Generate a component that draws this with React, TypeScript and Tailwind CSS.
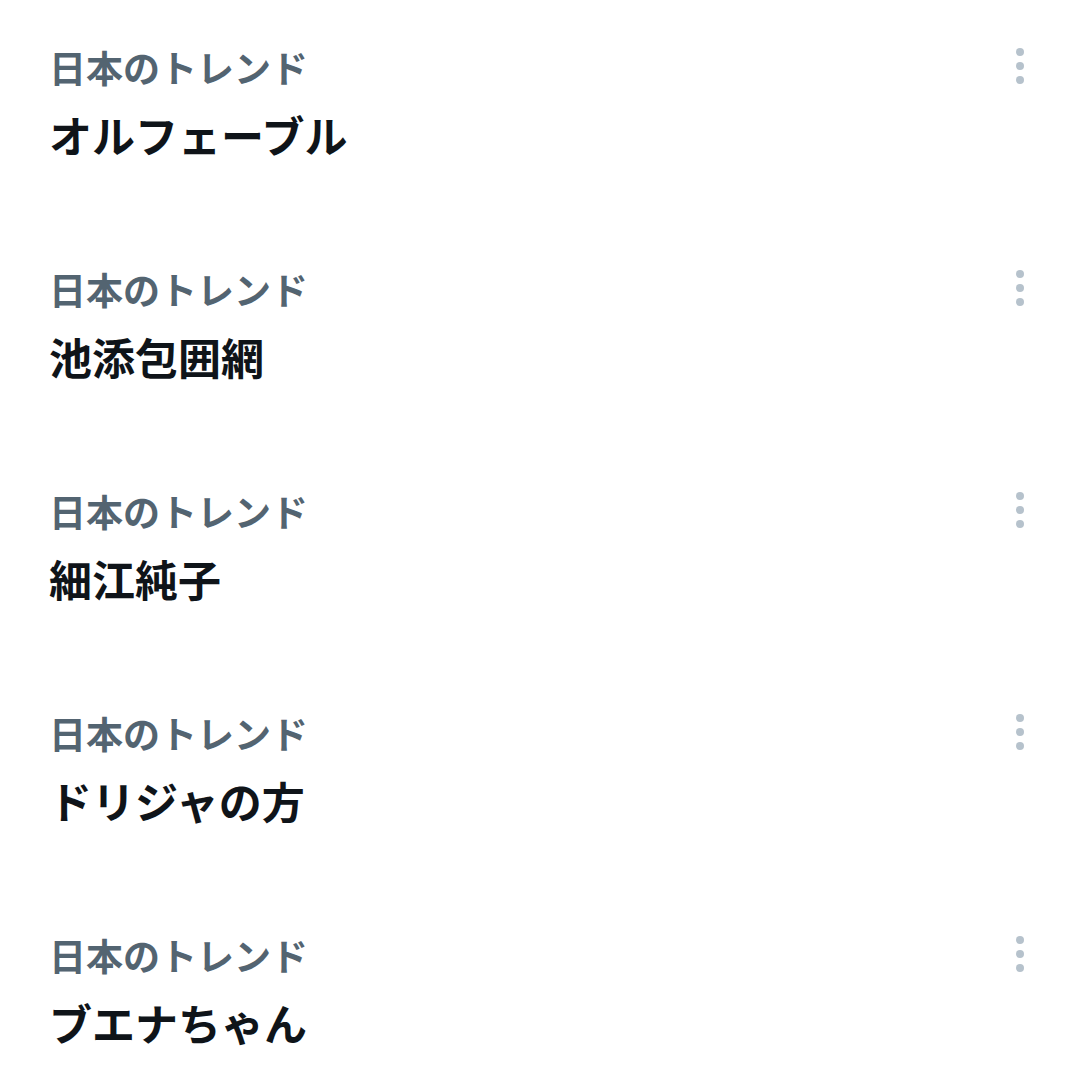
const trends = ['オルフェーブル', '池添包囲網', '細江純子', 'ドリジャの方', 'ブエナちゃん'];

function MoreDots() {
  return (
    <div className="flex flex-col items-center gap-[6px] pt-[5px]">
      <span className="h-[8px] w-[8px] rounded-full bg-[#b6c2cc]" />
      <span className="h-[8px] w-[8px] rounded-full bg-[#b6c2cc]" />
      <span className="h-[8px] w-[8px] rounded-full bg-[#b6c2cc]" />
    </div>
  );
}

export default function App() {
  return (
    <div
      className="h-[1086px] w-[1080px] overflow-hidden bg-white"
      style={{ fontFamily: '"Noto Sans CJK JP", "Noto Sans", sans-serif' }}
    >
      {trends.map(title => (
        <div key={title} className="flex h-[222px] items-start justify-between pl-[49px] pr-[56px] pt-[43px]">
          <div className="flex flex-col">
            <p className="text-[37px] leading-[48px] font-semibold text-[#536471]">日本のトレンド</p>
            <p className="mt-[15px] text-[43px] leading-[56px] font-bold text-[#0f1419]">{title}</p>
          </div>
          <MoreDots />
        </div>
      ))}
    </div>
  );
}
